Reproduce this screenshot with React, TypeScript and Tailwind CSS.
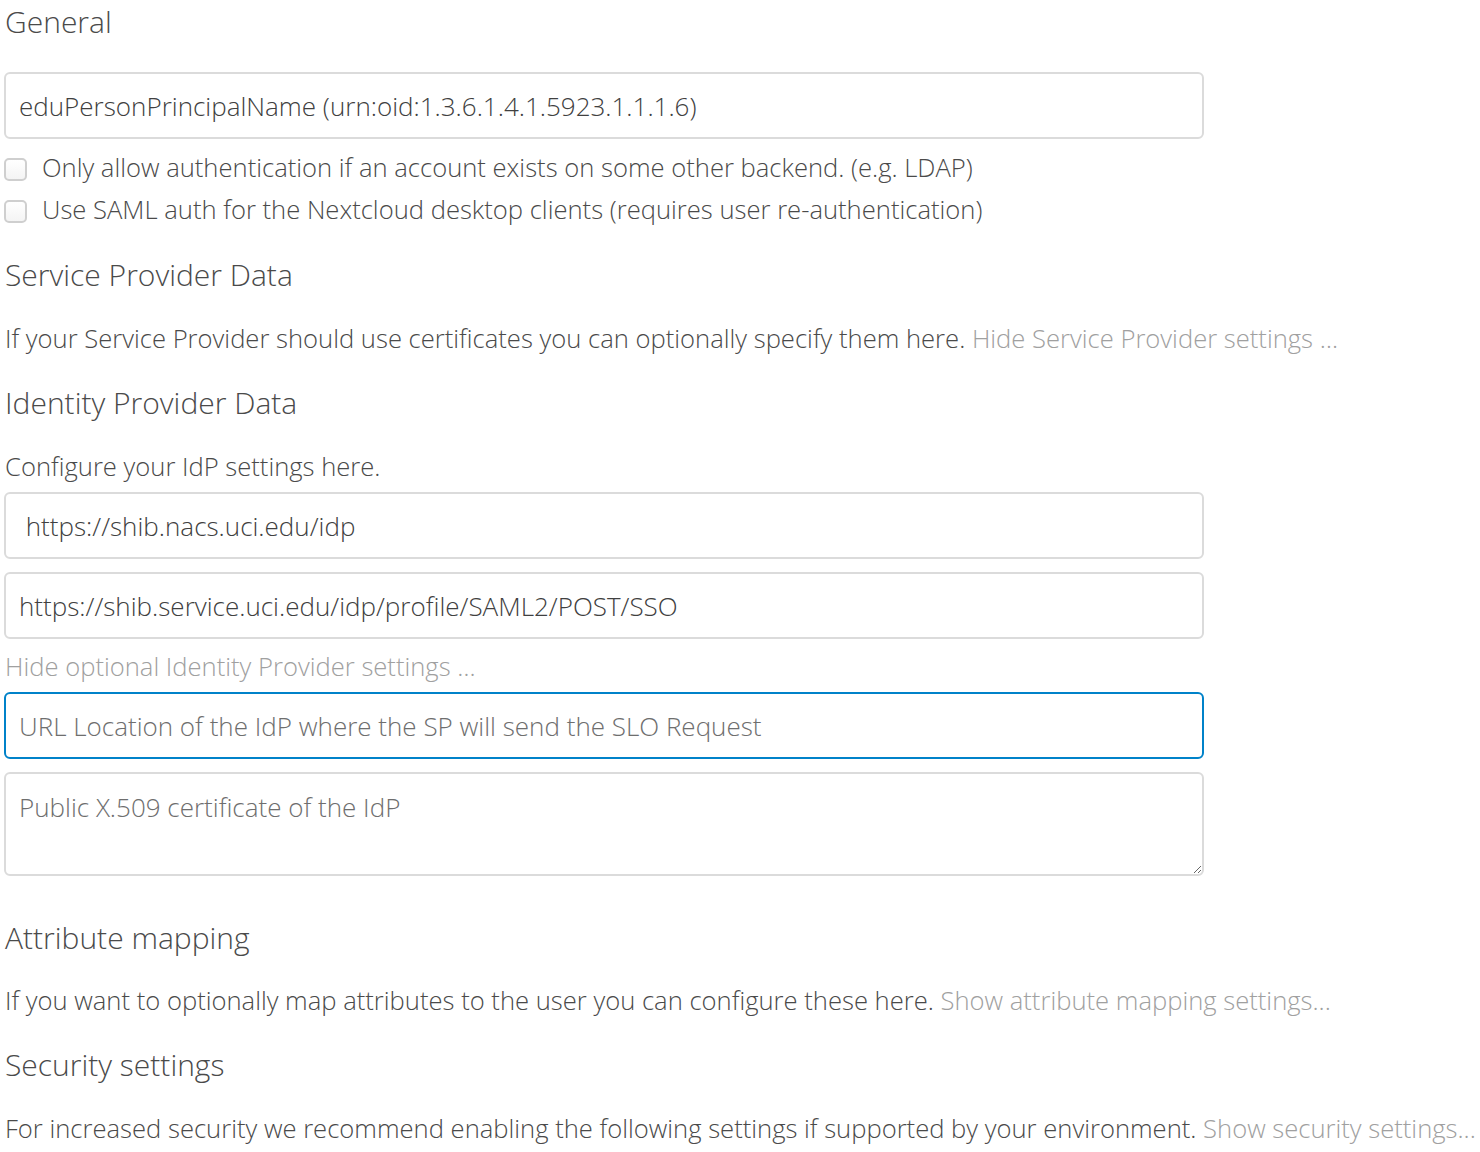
import React from "react";

const font = { fontFamily: '"Open Sans", "Noto Sans", sans-serif' };

function Heading({ children, className = "" }: { children: React.ReactNode; className?: string }) {
  return <h2 className={`text-[30px] leading-[40px] text-[#4a4a4a] font-light ${className}`}>{children}</h2>;
}

function Para({ children, className = "" }: { children: React.ReactNode; className?: string }) {
  return <p className={`text-[25.6px] leading-[40px] text-[#4a4a4a] font-light whitespace-nowrap ${className}`}>{children}</p>;
}

function TextInput({ value, placeholder, focused = false, className = "" }: { value?: string; placeholder?: string; focused?: boolean; className?: string }) {
  return (
    <input
      type="text"
      readOnly
      value={value ?? ""}
      placeholder={placeholder}
      className={`block w-[1200px] h-[67px] rounded-[6px] border-2 bg-white px-[13px] text-[26px] font-light text-[#404040] placeholder:text-[#6e6e6e] outline-none ${
        focused ? "border-[#0082c9]" : "border-[#dbdbdb]"
      } ${className}`}
      style={font}
    />
  );
}

function Check({ label }: { label: string }) {
  return (
    <label className="flex items-center h-[42px] text-[25.6px] font-light text-[#4a4a4a] whitespace-nowrap">
      <span className="inline-block w-[23px] h-[23px] rounded-[5px] border-2 border-[#cfcfcf] bg-gradient-to-b from-white to-[#f4f4f4] mr-[15px] mt-[3px]" />
      {label}
    </label>
  );
}

export default function App() {
  return (
    <div className="bg-white w-[1480px] h-[1152px] overflow-hidden pl-[4px] pt-[2px]" style={font}>
      <Heading className="pl-[1px]">General</Heading>
      <TextInput className="mt-[30px]" value="eduPersonPrincipalName (urn:oid:1.3.6.1.4.1.5923.1.1.1.6)" />
      <div className="mt-[8px]">
        <Check label="Only allow authentication if an account exists on some other backend. (e.g. LDAP)" />
        <Check label="Use SAML auth for the Nextcloud desktop clients (requires user re-authentication)" />
      </div>
      <Heading className="mt-[24px] pl-[1px]">Service Provider Data</Heading>
      <Para className="mt-[24px] pl-[1px]">
        If your Service Provider should use certificates you can optionally specify them here.{" "}
        <a className="text-[#a0a0a0]">Hide Service Provider settings …</a>
      </Para>
      <Heading className="mt-[24px] pl-[1px]">Identity Provider Data</Heading>
      <Para className="mt-[24px] pl-[1px]">Configure your IdP settings here.</Para>
      <TextInput className="mt-[5px]" value=" https://shib.nacs.uci.edu/idp" />
      <TextInput className="mt-[13px]" value="https://shib.service.uci.edu/idp/profile/SAML2/POST/SSO" />
      <Para className="mt-[8px] pl-[1px]">
        <a className="text-[#a0a0a0]">Hide optional Identity Provider settings …</a>
      </Para>
      <TextInput className="mt-[5px]" focused placeholder="URL Location of the IdP where the SP will send the SLO Request" />
      <textarea
        readOnly
        placeholder="Public X.509 certificate of the IdP"
        className="block mt-[13px] w-[1200px] h-[104px] rounded-[6px] border-2 border-[#dbdbdb] bg-white px-[13px] py-[14px] text-[26px] font-light leading-[38px] text-[#404040] placeholder:text-[#6e6e6e] outline-none"
        style={font}
      />
      <Heading className="mt-[42px] pl-[1px]">Attribute mapping</Heading>
      <Para className="mt-[23px] pl-[1px]">
        If you want to optionally map attributes to the user you can configure these here.{" "}
        <a className="text-[#a0a0a0]">Show attribute mapping settings...</a>
      </Para>
      <Heading className="mt-[24px] pl-[1px]">Security settings</Heading>
      <Para className="mt-[24px] pl-[1px]">
        For increased security we recommend enabling the following settings if supported by your environment.{" "}
        <a className="text-[#a0a0a0]">Show security settings...</a>
      </Para>
    </div>
  );
}
